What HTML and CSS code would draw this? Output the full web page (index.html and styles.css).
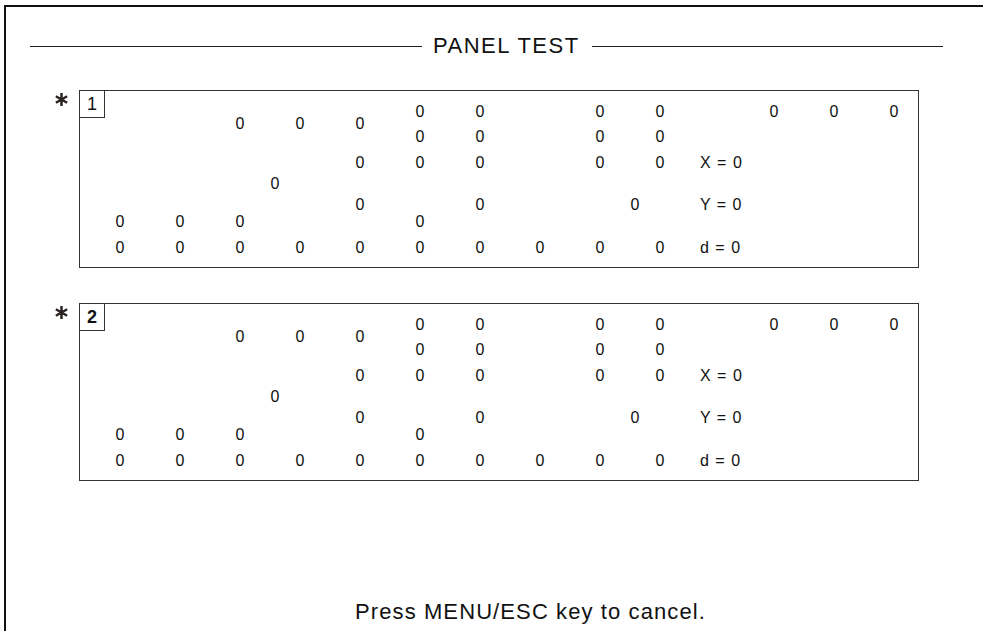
FILE: index.html
```html
<!DOCTYPE html>
<html>
<head>
    <meta charset='utf-8'>
    <title>PANEL TEST</title>
    <link rel="stylesheet" href="styles.css">
</head>
<body>
    <div class="frame">
        <div class="title">
            <div class="rule left"></div>
            <span>PANEL TEST</span>
            <div class="rule right"></div>
        </div>

        <!-- panel 1 -->
        <div class="unit">
            <svg class="star" viewBox="0 0 12 12"><path d="M6 0V12M0.8 3L11.2 9M0.8 9L11.2 3"/></svg>
            <div class="panel">
                <div class="tag">1</div>
                <div class="row">
                    <span class="c11">0</span><span class="c13">0</span><span class="c17">0</span><span class="c19">0</span>
                    <span class="c22">0</span><span class="c23">0</span><span class="c24">0</span>
                </div>
                <div class="row">
                    <span class="c5">0</span><span class="c7">0</span><span class="c9">0</span>
                </div>
                <div class="row sp1">
                    <span class="c11">0</span><span class="c13">0</span><span class="c17">0</span><span class="c19">0</span>
                </div>
                <div class="row sp14">
                    <span class="c9">0</span><span class="c11">0</span><span class="c13">0</span><span class="c17">0</span><span class="c19">0</span>
                    <span class="lbl">X = 0</span>
                </div>
                <div class="row sp9">
                    <span class="c6 nudge">0</span>
                </div>
                <div class="row sp9">
                    <span class="c9">0</span><span class="c13">0</span><span class="c18 nudge">0</span>
                    <span class="lbl">Y = 0</span>
                </div>
                <div class="row sp5">
                    <span class="c1">0</span><span class="c3">0</span><span class="c5">0</span><span class="c11">0</span>
                </div>
                <div class="row sp14">
                    <span class="c1">0</span><span class="c3">0</span><span class="c5">0</span><span class="c7">0</span><span class="c9">0</span>
                    <span class="c11">0</span><span class="c13">0</span><span class="c15">0</span><span class="c17">0</span><span class="c19">0</span>
                    <span class="lbl">d = 0</span>
                </div>
            </div>
        </div>

        <!-- panel 2 -->
        <div class="unit">
            <svg class="star" viewBox="0 0 12 12"><path d="M6 0V12M0.8 3L11.2 9M0.8 9L11.2 3"/></svg>
            <div class="panel">
                <div class="tag bold">2</div>
                <div class="row">
                    <span class="c11">0</span><span class="c13">0</span><span class="c17">0</span><span class="c19">0</span>
                    <span class="c22">0</span><span class="c23">0</span><span class="c24">0</span>
                </div>
                <div class="row">
                    <span class="c5">0</span><span class="c7">0</span><span class="c9">0</span>
                </div>
                <div class="row sp1">
                    <span class="c11">0</span><span class="c13">0</span><span class="c17">0</span><span class="c19">0</span>
                </div>
                <div class="row sp14">
                    <span class="c9">0</span><span class="c11">0</span><span class="c13">0</span><span class="c17">0</span><span class="c19">0</span>
                    <span class="lbl">X = 0</span>
                </div>
                <div class="row sp9">
                    <span class="c6 nudge">0</span>
                </div>
                <div class="row sp9">
                    <span class="c9">0</span><span class="c13">0</span><span class="c18 nudge">0</span>
                    <span class="lbl">Y = 0</span>
                </div>
                <div class="row sp5">
                    <span class="c1">0</span><span class="c3">0</span><span class="c5">0</span><span class="c11">0</span>
                </div>
                <div class="row sp14">
                    <span class="c1">0</span><span class="c3">0</span><span class="c5">0</span><span class="c7">0</span><span class="c9">0</span>
                    <span class="c11">0</span><span class="c13">0</span><span class="c15">0</span><span class="c17">0</span><span class="c19">0</span>
                    <span class="lbl">d = 0</span>
                </div>
            </div>
        </div>

        <p class="footer">Press MENU/ESC key to cancel.</p>
    </div>
</body>
</html>
```

FILE: styles.css
```css
html,body{
    margin: 0;
    padding: 0;
}
body{
    font-family: "Liberation Sans", Arial, sans-serif;
    color: #111;
    background: #fff;
    overflow: hidden;
}
.frame{
    margin: 5px 0 0 4px;
    height: 640px;
    border-top: 2px solid #111;
    border-left: 2px solid #111;
}
.title{
    display: flex;
    align-items: center;
    width: 913px;
    height: 26px;
    margin: 26px 0 0 24px;
    font-size: 22px;
    letter-spacing: 1.5px;
}
.title .rule{
    height: 1px;
    background: #222;
}
.title .left{
    width: 392px;
}
.title .right{
    flex: 1;
}
.title span{
    margin: 0 12px 0 11px;
    white-space: nowrap;
}
.unit{
    display: flex;
    align-items: flex-start;
    margin-top: 31px;
    padding-left: 49px;
}
.unit + .unit{
    margin-top: 35px;
}
.star{
    width: 13px;
    height: 13px;
    margin: 3px 11px 0 0;
    fill: none;
    stroke: #2b2222;
    stroke-width: 2.3;
}
.panel{
    position: relative;
    box-sizing: border-box;
    width: 840px;
    height: 178px;
    padding: 15px 0 0 10px;
    border: 1px solid #333;
}
.tag{
    position: absolute;
    left: -1px;
    top: -1px;
    box-sizing: border-box;
    width: 26px;
    height: 28px;
    border: 1px solid #333;
    font-size: 18px;
    line-height: 26px;
    text-align: center;
}
.tag.bold{
    font-weight: bold;
}
.row{
    display: grid;
    grid-template-columns: repeat(20, 30px) 54px repeat(3, 60px);
    height: 12px;
    font-size: 16px;
    line-height: 12px;
}
.row span{
    grid-row: 1;
    text-align: center;
}
.sp1{ margin-top: 1px; }
.sp5{ margin-top: 5px; }
.sp9{ margin-top: 9px; }
.sp14{ margin-top: 14px; }
.c1{ grid-column: 1 / span 2; }
.c3{ grid-column: 3 / span 2; }
.c5{ grid-column: 5 / span 2; }
.c6{ grid-column: 6 / span 2; }
.c7{ grid-column: 7 / span 2; }
.c9{ grid-column: 9 / span 2; }
.c11{ grid-column: 11 / span 2; }
.c13{ grid-column: 13 / span 2; }
.c15{ grid-column: 15 / span 2; }
.c17{ grid-column: 17 / span 2; }
.c18{ grid-column: 18 / span 2; }
.c19{ grid-column: 19 / span 2; }
.c22{ grid-column: 22; }
.c23{ grid-column: 23; }
.c24{ grid-column: 24; }
.row .nudge{
    padding-left: 10px;
}
.row .lbl{
    grid-column: 21;
    padding-left: 10px;
    text-align: left;
    white-space: nowrap;
    letter-spacing: 1px;
}
.footer{
    margin: 118px 0 0 0;
    padding-left: 349px;
    font-size: 22px;
    line-height: 26px;
    letter-spacing: 1.1px;
    white-space: nowrap;
}
```
